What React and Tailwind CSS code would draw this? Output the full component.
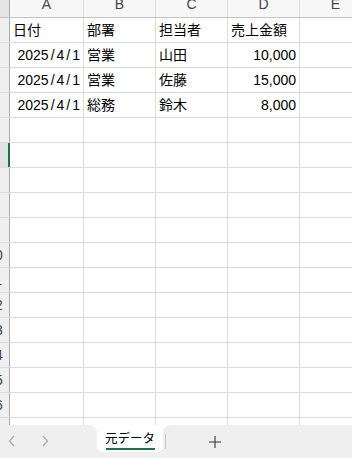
const cols = [
  { key: 'A', w: 'w-[74px]' },
  { key: 'B', w: 'w-[72px]' },
  { key: 'C', w: 'w-[72px]' },
  { key: 'D', w: 'w-[72px]' },
  { key: 'E', w: 'w-[72px]' },
];

const data = [
  ['日付', '部署', '担当者', '売上金額'],
  ['2025/4/1', '営業', '山田', '10,000'],
  ['2025/4/1', '営業', '佐藤', '15,000'],
  ['2025/4/1', '総務', '鈴木', '8,000'],
];

const rowCount = 17;

// dates are drawn with the wider slash that Excel's font has
function DateText({ value }) {
  const parts = value.split('/');
  return (
    <span>
      {parts.map((p, i) => (
        <span key={i}>
          {i > 0 ? <span className="px-[2px]">/</span> : null}
          {p}
        </span>
      ))}
    </span>
  );
}

function Cell({ value, width }) {
  const isDate = /^\d+\/\d+\/\d+$/.test(value);
  const right = /^[0-9,/]+$/.test(value);
  return (
    <div
      className={`${width} shrink-0 h-full border-r border-[#dcdcdc] flex items-center px-[3px] whitespace-nowrap overflow-hidden ${
        right ? 'justify-end' : ''
      }`}
    >
      {isDate ? <DateText value={value} /> : value}
    </div>
  );
}

function App() {
  return (
    <div
      className="w-[352px] h-[458px] overflow-hidden bg-white flex flex-col text-black"
      style={{ fontFamily: '"Liberation Sans", "Noto Sans CJK JP", sans-serif' }}
    >
      <div className="flex-1 overflow-hidden">
        {/* column headers */}
        <div className="flex h-[18px] border-b border-[#c4c4c4] bg-[#f7f7f7]">
          <div className="w-[10px] shrink-0 border-r border-[#ababab] bg-[#e4e4e4]" />
          {cols.map((c) => (
            <div
              key={c.key}
              className={`${c.w} shrink-0 border-r border-[#dcdcdc] flex justify-center text-[14px] leading-[14px] text-[#444]`}
            >
              <span className="-mt-[3px]">{c.key}</span>
            </div>
          ))}
        </div>

        {Array.from({ length: rowCount }, (_, i) => {
          const row = data[i] || [];
          const selected = i === 5;
          return (
            <div key={i} className="flex h-[25px] border-b border-[#dcdcdc] text-[14px]">
              <div
                className={`w-[10px] shrink-0 overflow-hidden flex justify-end ${
                  selected ? 'bg-[#e1e1e1] border-r-2 border-[#1e7145]' : 'bg-[#efefef] border-r border-[#ababab]'
                }`}
              >
                <span className="w-[28px] shrink-0 text-center text-[#444] leading-[24px]">{i + 1}</span>
              </div>
              {cols.map((c, j) => (
                <Cell key={c.key} width={c.w} value={row[j] || ''} />
              ))}
            </div>
          );
        })}
      </div>

      {/* sheet tabs */}
      <div className="h-[33px] shrink-0 flex bg-white">
        <div className="w-[97px] shrink-0 bg-[#efefef] rounded-tr-[8px] flex items-center pb-[1px]">
          <svg width="8" height="12" viewBox="0 0 8 12" className="ml-[8px]">
            <path d="M6 1 L1.5 6 L6 11" fill="none" stroke="#a8a8a8" strokeWidth="1.2" />
          </svg>
          <svg width="8" height="12" viewBox="0 0 8 12" className="ml-[25px]">
            <path d="M2 1 L6.5 6 L2 11" fill="none" stroke="#a8a8a8" strokeWidth="1.2" />
          </svg>
        </div>
        <div className="w-[66px] shrink-0 bg-[#efefef] flex flex-col">
          <div className="h-[27px] bg-white rounded-b-[6px] flex flex-col items-center">
            <span
              className="mt-[5px] text-[12.5px] leading-[16px] text-black"
              style={{ fontFamily: '"Noto Sans CJK JP", sans-serif' }}
            >
              元データ
            </span>
            <div className="w-[49px] h-[2px] bg-[#1e7145] mt-[2px]" />
          </div>
        </div>
        <div className="flex-1 bg-[#efefef] rounded-tl-[8px] flex items-center">
          <div className="w-[1px] h-[15px] bg-[#c4c4c4] ml-[2px]" />
          <svg width="12" height="12" viewBox="0 0 12 12" className="ml-[43px]">
            <path d="M6 0 V12 M0 6 H12" fill="none" stroke="#333" strokeWidth="1.1" />
          </svg>
        </div>
      </div>
    </div>
  );
}

export default App;
